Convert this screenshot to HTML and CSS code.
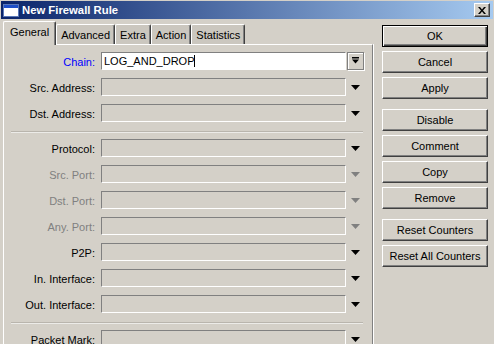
FILE: index.html
```html
<!DOCTYPE html>
<html>
<head>
<meta charset="utf-8">
<link rel="stylesheet" href="styles.css">
</head>
<body>
<div class="window">
  <div class="titlebar">
    <svg class="app-icon" width="16" height="13" viewBox="0 0 16 13">
      <rect x="0.5" y="0.5" width="15" height="12" fill="#fff" stroke="#5a78b8"/>
      <rect x="1" y="1" width="14" height="3" fill="#1e4fc8"/>
    </svg>
    <span class="title">New Firewall Rule</span>
    <div class="close">
      <svg width="8" height="7" viewBox="0 0 8 7">
        <path d="M0 0h2l2 2.5L6 0h2L5 3.5 8 7H6L4 4.5 2 7H0l3-3.5z" fill="#000"/>
      </svg>
    </div>
  </div>
  <div class="content">
    <div class="tabarea">
      <div class="tabs">
        <div class="tab tab-active">General</div>
        <div class="tab">Advanced</div>
        <div class="tab">Extra</div>
        <div class="tab">Action</div>
        <div class="tab">Statistics</div>
      </div>
      <div class="panel">
        <div class="row">
          <div class="lbl lbl-blue">Chain:</div>
          <div class="field field-white">LOG_AND_DROP<span class="caret"></span></div>
          <div class="ddbtn">
            <svg width="7" height="7" viewBox="0 0 7 7"><rect x="0" y="0" width="7" height="1.5" fill="#000"/><polygon points="0,2.5 7,2.5 3.5,6.5" fill="#000"/></svg>
          </div>
        </div>
        <div class="row">
          <div class="lbl">Src. Address:</div>
          <div class="field"></div>
          <div class="arrow"><svg width="9" height="5" viewBox="0 0 9 5"><polygon points="0,0 9,0 4.5,5" fill="#000"/></svg></div>
        </div>
        <div class="row">
          <div class="lbl">Dst. Address:</div>
          <div class="field"></div>
          <div class="arrow"><svg width="9" height="5" viewBox="0 0 9 5"><polygon points="0,0 9,0 4.5,5" fill="#000"/></svg></div>
        </div>
        <div class="sep"></div>
        <div class="row">
          <div class="lbl">Protocol:</div>
          <div class="field"></div>
          <div class="arrow"><svg width="9" height="5" viewBox="0 0 9 5"><polygon points="0,0 9,0 4.5,5" fill="#000"/></svg></div>
        </div>
        <div class="row">
          <div class="lbl lbl-dis">Src. Port:</div>
          <div class="field"></div>
          <div class="arrow"><svg width="9" height="5" viewBox="0 0 9 5"><polygon points="0,0 9,0 4.5,5" fill="#808080"/></svg></div>
        </div>
        <div class="row">
          <div class="lbl lbl-dis">Dst. Port:</div>
          <div class="field"></div>
          <div class="arrow"><svg width="9" height="5" viewBox="0 0 9 5"><polygon points="0,0 9,0 4.5,5" fill="#808080"/></svg></div>
        </div>
        <div class="row">
          <div class="lbl lbl-dis">Any. Port:</div>
          <div class="field"></div>
          <div class="arrow"><svg width="9" height="5" viewBox="0 0 9 5"><polygon points="0,0 9,0 4.5,5" fill="#808080"/></svg></div>
        </div>
        <div class="row">
          <div class="lbl">P2P:</div>
          <div class="field"></div>
          <div class="arrow"><svg width="9" height="5" viewBox="0 0 9 5"><polygon points="0,0 9,0 4.5,5" fill="#000"/></svg></div>
        </div>
        <div class="row">
          <div class="lbl">In. Interface:</div>
          <div class="field"></div>
          <div class="arrow"><svg width="9" height="5" viewBox="0 0 9 5"><polygon points="0,0 9,0 4.5,5" fill="#000"/></svg></div>
        </div>
        <div class="row">
          <div class="lbl">Out. Interface:</div>
          <div class="field"></div>
          <div class="arrow"><svg width="9" height="5" viewBox="0 0 9 5"><polygon points="0,0 9,0 4.5,5" fill="#000"/></svg></div>
        </div>
        <div class="sep"></div>
        <div class="row">
          <div class="lbl">Packet Mark:</div>
          <div class="field"></div>
          <div class="arrow"><svg width="9" height="5" viewBox="0 0 9 5"><polygon points="0,0 9,0 4.5,5" fill="#000"/></svg></div>
        </div>
      </div>
    </div>
    <div class="buttons">
      <div class="group">
        <div class="btn btn-default">OK</div>
        <div class="btn">Cancel</div>
        <div class="btn">Apply</div>
      </div>
      <div class="group">
        <div class="btn">Disable</div>
        <div class="btn">Comment</div>
        <div class="btn">Copy</div>
        <div class="btn">Remove</div>
      </div>
      <div class="group">
        <div class="btn">Reset Counters</div>
        <div class="btn">Reset All Counters</div>
      </div>
    </div>
  </div>
</div>
</body>
</html>
```

FILE: styles.css
```css
html, body {
  margin: 0;
  padding: 0;
  background: #d4d0c8;
}
body {
  font-family: "Liberation Sans", Arial, sans-serif;
  font-size: 11px;
  color: #000;
}
.window {
  width: 494px;
  height: 344px;
  overflow: hidden;
  box-sizing: border-box;
  padding: 1px 1px 0 1px;
  background: #d4d0c8;
}
.titlebar {
  height: 18px;
  display: flex;
  align-items: center;
  background: linear-gradient(to right, #0a246a, #a6caf0);
}
.app-icon {
  margin-left: 2px;
  flex: none;
}
.title {
  margin-left: 3px;
  color: #fff;
  font-weight: bold;
  font-size: 11.3px;
  line-height: 18px;
}
.close {
  margin-left: auto;
  margin-right: 3px;
  width: 16px;
  height: 14px;
  box-sizing: border-box;
  background: #d4d0c8;
  border-top: 1px solid #fff;
  border-left: 1px solid #fff;
  border-right: 1px solid #404040;
  border-bottom: 1px solid #404040;
  box-shadow: inset -1px -1px 0 #808080;
  display: flex;
  align-items: center;
  justify-content: center;
}
.content {
  display: flex;
  align-items: flex-start;
}
.tabarea {
  margin-left: 2px;
  padding-top: 2px;
  width: 370px;
}
.tabs {
  display: flex;
  align-items: flex-end;
  height: 23px;
}
.tab {
  height: 20px;
  box-sizing: border-box;
  padding: 0 4px;
  line-height: 20px;
  background: #cbc7bf;
  border-top: 1px solid #fff;
  border-left: 1px solid #fff;
  border-right: 1px solid #404040;
  box-shadow: inset -1px 0 0 #808080;
  border-radius: 2px 2px 0 0;
  white-space: nowrap;
}
.tab-active {
  position: relative;
  z-index: 1;
  height: 24px;
  margin-bottom: -1px;
  padding: 0 6px;
  line-height: 20px;
  background: #d4d0c8;
}
.panel {
  box-sizing: border-box;
  height: 320px;
  border-top: 1px solid #fff;
  border-left: 1px solid #fff;
  border-right: 1px solid #808080;
  box-shadow: 1px 0 0 #fff;
  padding-top: 7px;
}
.row {
  display: flex;
  align-items: center;
  height: 18px;
  margin-bottom: 8px;
}
.lbl {
  width: 91px;
  margin-right: 6px;
  text-align: right;
  white-space: nowrap;
  flex: none;
  padding-top: 1px;
}
.lbl-blue { color: #0000ff; }
.lbl-dis { color: #808080; }
.field {
  width: 245px;
  height: 18px;
  box-sizing: border-box;
  flex: none;
  border-top: 1px solid #808080;
  border-left: 1px solid #808080;
  border-right: 1px solid #fff;
  border-bottom: 1px solid #fff;
  background: #d4d0c8;
  line-height: 16px;
  padding-left: 2px;
}
.field-white {
  background: #fff;
  display: flex;
  align-items: center;
}
.caret {
  display: inline-block;
  width: 1px;
  height: 12px;
  background: #000;
}
.ddbtn {
  width: 17px;
  height: 18px;
  box-sizing: border-box;
  margin-left: 1px;
  border: 1px solid #808080;
  box-shadow: 1px 1px 0 #fff, inset 1px 1px 0 #fff;
  display: flex;
  justify-content: center;
  padding-top: 4px;
  flex: none;
}
.ddbtn svg { display: block; }
.arrow {
  width: 18px;
  height: 18px;
  display: flex;
  align-items: center;
  justify-content: center;
  flex: none;
}
.arrow svg { display: block; }
.sep {
  margin: 9px 0 6px 7px;
  width: 352px;
  height: 0;
  border-top: 1px solid #b9b5ad;
  border-bottom: 1px solid #ecebe8;
}
.buttons {
  margin-left: 9px;
  padding-top: 6px;
  display: flex;
  flex-direction: column;
  gap: 10px;
}
.group {
  display: flex;
  flex-direction: column;
  gap: 4px;
}
.btn {
  width: 106px;
  height: 22px;
  box-sizing: border-box;
  border-top: 1px solid #fff;
  border-left: 1px solid #fff;
  border-right: 1px solid #404040;
  border-bottom: 1px solid #404040;
  box-shadow: inset -1px -1px 0 #808080;
  text-align: center;
  line-height: 20px;
  background: #d4d0c8;
}
.btn-default {
  border: 1px solid #000;
  box-shadow: inset 1px 1px 0 #fff, inset -1px -1px 0 #404040, inset -2px -2px 0 #808080;
}
```
